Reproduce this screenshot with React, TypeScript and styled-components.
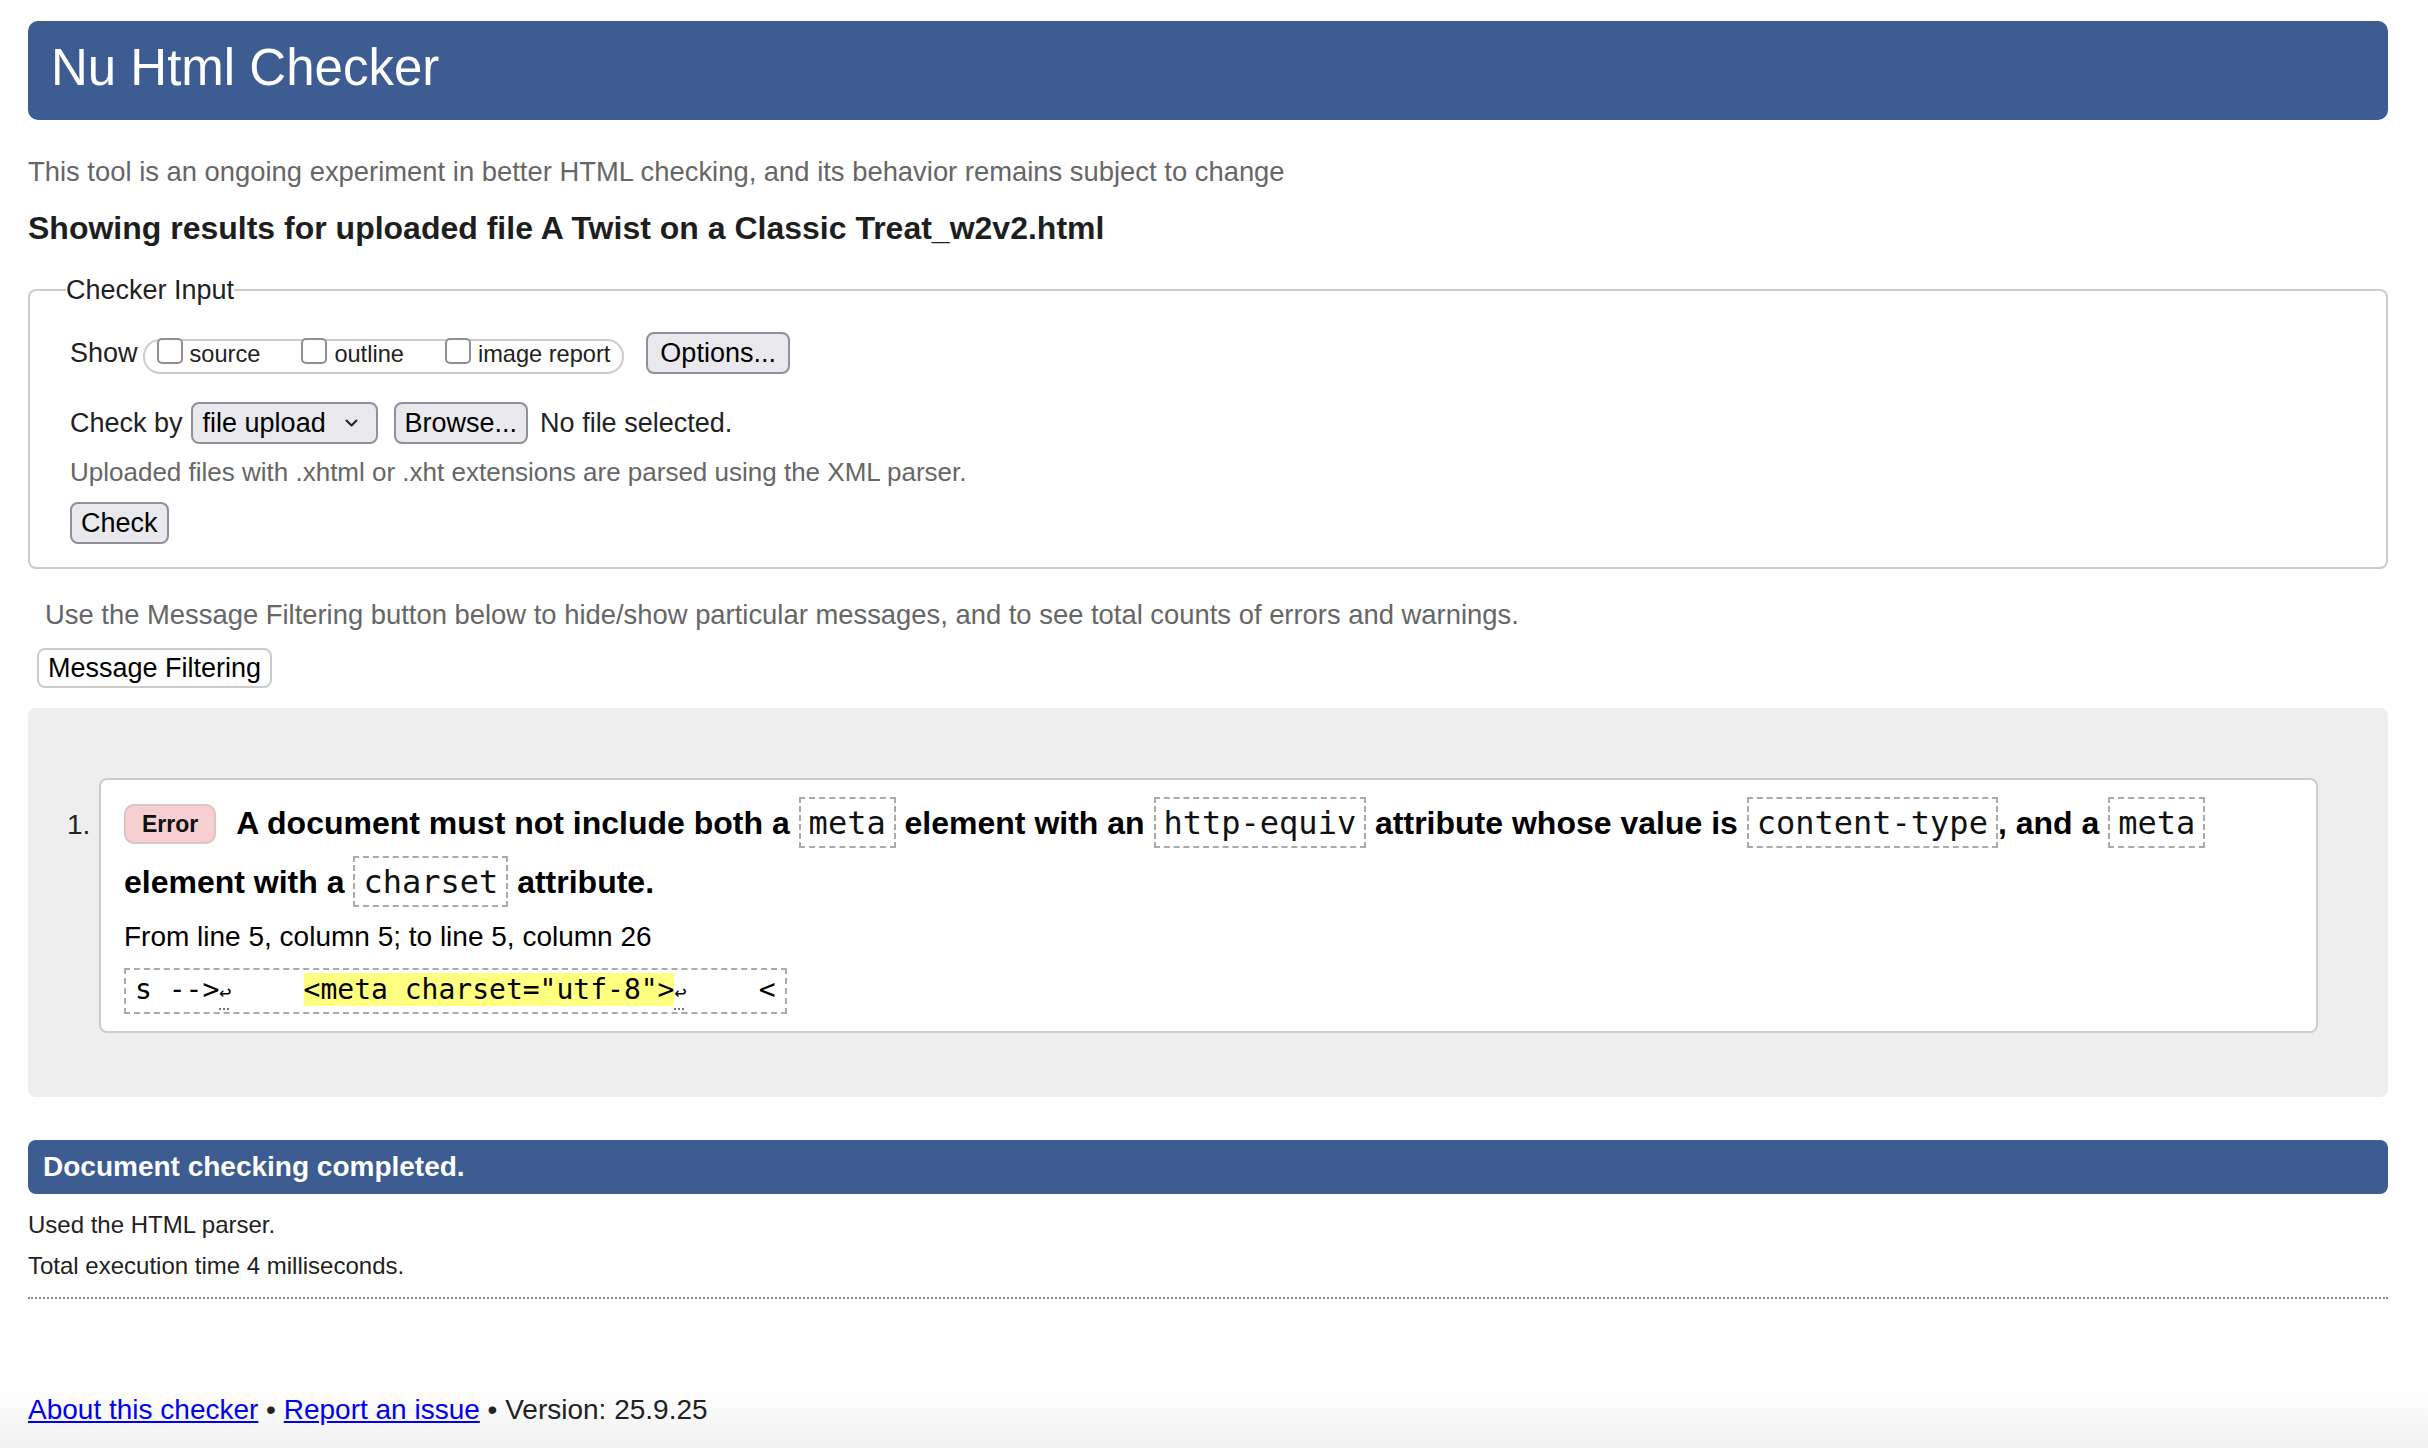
import React from "react";
import styled, { createGlobalStyle } from "styled-components";

const BLUE = "#3d5c91";

const GlobalStyle = createGlobalStyle`
  html, body { margin: 0; padding: 0; }
  body {
    font-family: "Liberation Sans", Arial, Helvetica, sans-serif;
    color: #222;
    background: #fff;
  }
  * { box-sizing: border-box; }
`;

const Page = styled.div`
  min-height: 100vh;
  padding: 21px 40px 20px 28px;
  display: flex;
  flex-direction: column;
  background: linear-gradient(to bottom, #fff 0, #fff calc(100% - 66px), #f1f1f1 100%);
`;

const Header = styled.header`
  height: 99px;
  background: ${BLUE};
  border-radius: 10px;
  padding: 0 23px;
`;

const Title = styled.h1`
  margin: 0;
  font-size: 51px;
  font-weight: 400;
  line-height: 94px;
  color: #fff;
`;

const Intro = styled.p`
  margin: 34px 0 0;
  font-size: 27.4px;
  line-height: 36px;
  color: #666;
`;

const Heading = styled.h2`
  margin: 18px 0 0;
  font-size: 32px;
  line-height: 40px;
  font-weight: 700;
  color: #1e1e1e;
`;

const Fieldset = styled.fieldset`
  margin: 26px 0 0;
  padding: 26px 40px 23px;
  border: 2px solid #ccc;
  border-radius: 8px;
  min-width: 0;
`;

const Legend = styled.legend`
  padding: 0;
  margin-left: -4px;
  font-size: 27px;
  line-height: 32px;
  color: #222;
`;

const Row = styled.div<{ $gap?: number }>`
  display: flex;
  align-items: flex-start;
  height: 42px;
  margin-top: ${(p) => p.$gap ?? 0}px;
  font-size: 27px;
  line-height: 42px;
  color: #222;
`;

const OptionGroup = styled.div`
  display: flex;
  align-items: flex-start;
  height: 35px;
  margin: 7px 0 0 5px;
  padding: 0 12px;
  border: 2px solid #ccc;
  border-radius: 17px;
`;

const Check = styled.span<{ $first?: boolean }>`
  display: inline-block;
  width: 26px;
  height: 26px;
  margin: -3px 0 0 ${(p) => (p.$first ? 0 : 41)}px;
  border: 2px solid #8e8e8e;
  border-radius: 5px;
  background: #fff;
`;

const CheckLabel = styled.span`
  margin: -2px 0 0 7px;
  font-size: 23.6px;
  line-height: 31px;
  color: #222;
`;

const Button = styled.button<{ $left?: number }>`
  height: 42px;
  margin-left: ${(p) => p.$left ?? 0}px;
  padding: 0 9px;
  font-family: inherit;
  font-size: 27px;
  color: #000;
  background: #e9e9ed;
  border: 2px solid #8f8f9d;
  border-radius: 8px;
`;

const OptionsButton = styled(Button)`
  padding: 0 12px;
`;

const Picker = styled.div`
  display: flex;
  align-items: center;
  justify-content: space-between;
  width: 187px;
  height: 42px;
  margin-left: 8px;
  padding: 0 18px 0 10px;
  font-size: 27px;
  color: #000;
  background: #e9e9ed;
  border: 2px solid #8f8f9d;
  border-radius: 8px;
`;

const Plain = styled.span<{ $left?: number }>`
  margin-left: ${(p) => p.$left ?? 0}px;
`;

const Hint = styled.p`
  margin: 10px 0 0;
  font-size: 26px;
  line-height: 36px;
  color: #666;
`;

const CheckButton = styled(Button)`
  display: block;
  margin-top: 12px;
`;

const FilterNote = styled.p`
  margin: 28px 0 0 17px;
  font-size: 27.4px;
  line-height: 36px;
  color: #666;
`;

const FilterButton = styled.button`
  align-self: flex-start;
  height: 40px;
  margin: 15px 0 0 9px;
  padding: 0 9px;
  font-family: inherit;
  font-size: 27px;
  color: #000;
  background: #fff;
  border: 2px solid #ccc;
  border-radius: 8px;
`;

const Results = styled.section`
  display: flex;
  align-items: baseline;
  margin-top: 20px;
  padding: 70px 70px 64px 39px;
  background: #eee;
  border-radius: 8px;
`;

const Num = styled.span`
  width: 32px;
  flex: none;
  font-size: 28px;
  color: #222;
`;

const Card = styled.div`
  flex: 1;
  display: flex;
  flex-direction: column;
  align-items: flex-start;
  padding: 14px 20px 17px 23px;
  background: #fff;
  border: 2px solid #ccc;
  border-radius: 8px;
`;

const Message = styled.p`
  margin: 0;
  font-size: 32px;
  line-height: 59px;
  font-weight: 700;
  color: #000;
`;

const Badge = styled.span`
  display: inline-block;
  margin-right: 20px;
  padding: 0 16px;
  font-size: 23px;
  line-height: 36px;
  font-weight: 700;
  color: #111;
  background: #f6d0d0;
  border: 2px solid #dcc4c4;
  border-radius: 10px;
  vertical-align: 2px;
`;

const Code = styled.code`
  padding: 5px 8px 4px;
  font-family: "DejaVu Sans Mono", "Liberation Mono", monospace;
  font-size: 32px;
  font-weight: 400;
  color: #111;
  border: 2px dashed #aaa;
`;

const Location = styled.p`
  margin: 5px 0 0;
  font-size: 28px;
  line-height: 40px;
  color: #000;
`;

const Extract = styled.pre`
  margin: 11px 0 0;
  padding: 0 9px;
  font-family: "DejaVu Sans Mono", "Liberation Mono", monospace;
  font-size: 28px;
  line-height: 40px;
  color: #000;
  border: 2px dashed #aaa;
`;

const Highlight = styled.mark`
  background: #ffff80;
  color: #000;
`;

const LineFeed = styled.span`
  display: inline-block;
  width: 16.86px;
  font-size: 20px;
  text-decoration: underline dotted #777;
  text-underline-offset: 9px;
`;

const Done = styled.div`
  margin-top: 43px;
  height: 54px;
  padding-left: 15px;
  font-size: 28px;
  line-height: 54px;
  font-weight: 700;
  color: #fff;
  background: ${BLUE};
  border-radius: 8px;
`;

const Detail = styled.p<{ $top?: number }>`
  margin: ${(p) => p.$top ?? 0}px 0 0;
  font-size: 24px;
  line-height: 41px;
  color: #222;
`;

const Rule = styled.hr`
  margin: 11px 0 0;
  height: 0;
  border: 0;
  border-top: 2px dotted #888;
`;

const Footer = styled.footer`
  margin-top: 91px;
  font-size: 28px;
  line-height: 40px;
  color: #222;
`;

const Link = styled.a`
  color: #0000ee;
  text-decoration: underline;
`;

function Chevron() {
  return (
    <svg width="13" height="8" viewBox="0 0 13 8" fill="none">
      <path d="M1.5 1.5 L6.5 6.5 L11.5 1.5" stroke="#222" strokeWidth="2" strokeLinecap="round" strokeLinejoin="round" />
    </svg>
  );
}

const SHOW_OPTIONS = ["source", "outline", "image report"];

export default function App() {
  return (
    <>
      <GlobalStyle />
      <Page>
        <Header>
          <Title>Nu Html Checker</Title>
        </Header>

        <Intro>This tool is an ongoing experiment in better HTML checking, and its behavior remains subject to change</Intro>
        <Heading>Showing results for uploaded file A Twist on a Classic Treat_w2v2.html</Heading>

        <Fieldset>
          <Legend>Checker Input</Legend>
          <Row>
            <span>Show</span>
            <OptionGroup>
              {SHOW_OPTIONS.map((opt, i) => (
                <React.Fragment key={opt}>
                  <Check $first={i === 0} />
                  <CheckLabel>{opt}</CheckLabel>
                </React.Fragment>
              ))}
            </OptionGroup>
            <OptionsButton $left={22}>Options...</OptionsButton>
          </Row>
          <Row $gap={28}>
            <span>Check by</span>
            <Picker>
              <span>file upload</span>
              <Chevron />
            </Picker>
            <Button $left={16}>Browse...</Button>
            <Plain $left={12}>No file selected.</Plain>
          </Row>
          <Hint>Uploaded files with .xhtml or .xht extensions are parsed using the XML parser.</Hint>
          <CheckButton>Check</CheckButton>
        </Fieldset>

        <FilterNote>
          Use the Message Filtering button below to hide/show particular messages, and to see total counts of errors and warnings.
        </FilterNote>
        <FilterButton>Message Filtering</FilterButton>

        <Results>
          <Num>1.</Num>
          <Card>
            <Message>
              <Badge>Error</Badge>A document must not include both a <Code>meta</Code> element with an{" "}
              <Code>http-equiv</Code> attribute whose value is <Code>content-type</Code>, and a <Code>meta</Code>{" "}
              element with a <Code>charset</Code> attribute.
            </Message>
            <Location>From line 5, column 5; to line 5, column 26</Location>
            <Extract>
              {"s -->"}
              <LineFeed>↩</LineFeed>
              {"    "}
              <Highlight>{'<meta charset="utf-8">'}</Highlight>
              <LineFeed>↩</LineFeed>
              {"    <"}
            </Extract>
          </Card>
        </Results>

        <Done>Document checking completed.</Done>
        <Detail $top={10}>Used the HTML parser.</Detail>
        <Detail>Total execution time 4 milliseconds.</Detail>
        <Rule />

        <Footer>
          <Link href="#about">About this checker</Link> • <Link href="#issue">Report an issue</Link> • Version: 25.9.25
        </Footer>
      </Page>
    </>
  );
}
